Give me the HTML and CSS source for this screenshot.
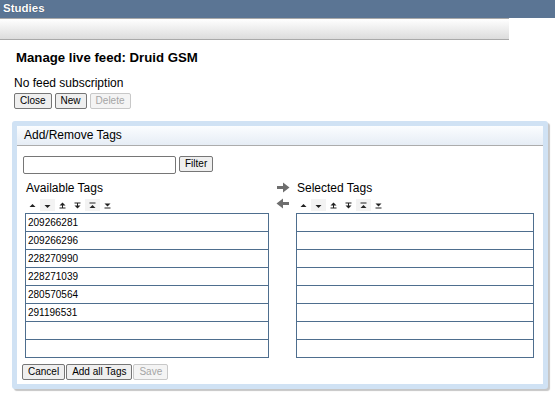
FILE: index.html
```html
<!DOCTYPE html>
<html>
<head>
<meta charset="utf-8">
<link rel="stylesheet" href="styles.css">
</head>
<body>
<div class="topbar">Studies</div>
<div class="toolbar"></div>
<div class="main">
  <h1 class="title">Manage live feed: Druid GSM</h1>
  <div class="status">No feed subscription</div>
  <div class="btnrow">
    <button class="btn">Close</button>
    <button class="btn">New</button>
    <button class="btn" disabled>Delete</button>
  </div>
  <div class="panel">
    <div class="panel-head">Add/Remove Tags</div>
    <div class="panel-body">
      <div class="filter-row">
        <input class="filter-input" type="text">
        <button class="btn">Filter</button>
      </div>
      <div class="columns">
        <div class="col col-left">
          <div class="col-title">Available Tags</div>
          <div class="sorters">
            <span class="sorter"><svg viewBox="0 0 15 11" width="15" height="11"><polygon points="4.5,7 7.5,4 10.5,7" /></svg></span>
            <span class="sorter shade"><svg viewBox="0 0 15 11" width="15" height="11"><polygon points="4.5,5 10.5,5 7.5,8" /></svg></span>
            <span class="sorter"><svg viewBox="0 0 15 11" width="15" height="11"><polygon points="4.5,5.5 7.5,2.5 10.5,5.5" /><rect x="7" y="5" width="1" height="3"/><rect x="4.5" y="7.5" width="6" height="1"/></svg></span>
            <span class="sorter"><svg viewBox="0 0 15 11" width="15" height="11"><rect x="4.5" y="2.5" width="6" height="1"/><rect x="7" y="3" width="1" height="3"/><polygon points="4.5,5.5 10.5,5.5 7.5,8.5" /></svg></span>
            <span class="sorter shade"><svg viewBox="0 0 15 11" width="15" height="11"><rect x="4.5" y="2.5" width="6" height="1"/><polygon points="4.5,8 7.5,5 10.5,8" /></svg></span>
            <span class="sorter"><svg viewBox="0 0 15 11" width="15" height="11"><polygon points="4.5,3.5 10.5,3.5 7.5,6.5" /><rect x="4.5" y="7.5" width="6" height="1"/></svg></span>
          </div>
          <div class="list">
            <div class="row">209266281</div>
            <div class="row">209266296</div>
            <div class="row">228270990</div>
            <div class="row">228271039</div>
            <div class="row">280570564</div>
            <div class="row">291196531</div>
            <div class="row"></div>
            <div class="row"></div>
          </div>
        </div>
        <div class="arrows">
          <svg viewBox="0 0 14 11" width="14" height="11"><path d="M1 4 H7 V0.5 L13.5 5.5 L7 10.5 V7 H1 Z"/></svg>
          <svg viewBox="0 0 14 11" width="14" height="11"><path d="M13 4 H7 V0.5 L0.5 5.5 L7 10.5 V7 H13 Z"/></svg>
        </div>
        <div class="col col-right">
          <div class="col-title">Selected Tags</div>
          <div class="sorters">
            <span class="sorter"><svg viewBox="0 0 15 11" width="15" height="11"><polygon points="4.5,7 7.5,4 10.5,7" /></svg></span>
            <span class="sorter shade"><svg viewBox="0 0 15 11" width="15" height="11"><polygon points="4.5,5 10.5,5 7.5,8" /></svg></span>
            <span class="sorter"><svg viewBox="0 0 15 11" width="15" height="11"><polygon points="4.5,5.5 7.5,2.5 10.5,5.5" /><rect x="7" y="5" width="1" height="3"/><rect x="4.5" y="7.5" width="6" height="1"/></svg></span>
            <span class="sorter"><svg viewBox="0 0 15 11" width="15" height="11"><rect x="4.5" y="2.5" width="6" height="1"/><rect x="7" y="3" width="1" height="3"/><polygon points="4.5,5.5 10.5,5.5 7.5,8.5" /></svg></span>
            <span class="sorter shade"><svg viewBox="0 0 15 11" width="15" height="11"><rect x="4.5" y="2.5" width="6" height="1"/><polygon points="4.5,8 7.5,5 10.5,8" /></svg></span>
            <span class="sorter"><svg viewBox="0 0 15 11" width="15" height="11"><polygon points="4.5,3.5 10.5,3.5 7.5,6.5" /><rect x="4.5" y="7.5" width="6" height="1"/></svg></span>
          </div>
          <div class="list">
            <div class="row"></div>
            <div class="row"></div>
            <div class="row"></div>
            <div class="row"></div>
            <div class="row"></div>
            <div class="row"></div>
            <div class="row"></div>
            <div class="row"></div>
          </div>
        </div>
      </div>
      <div class="btnrow bottom">
        <button class="btn">Cancel</button>
        <button class="btn">Add all Tags</button>
        <button class="btn" disabled>Save</button>
      </div>
    </div>
  </div>
</div>
</body>
</html>
```

FILE: styles.css
```css
* { box-sizing: border-box; }
html, body { margin: 0; padding: 0; background: #fff; }
body {
  font-family: "Liberation Sans", Arial, sans-serif;
  color: #000;
  width: 555px;
  height: 403px;
  overflow: hidden;
}
.topbar {
  height: 18px;
  background: #5b7594;
  color: #fff;
  font-weight: bold;
  font-size: 11.5px;
  line-height: 16px;
  padding-left: 3px;
  text-shadow: 0 0 1px #2d3c50;
}
.toolbar {
  width: 509px;
  height: 22px;
  border-top: 1px solid #a9a9a9;
  border-bottom: 1px solid #a9a9a9;
  background: linear-gradient(#ffffff, #dcdcdc);
}
.main {
  padding-left: 14px;
}
.title {
  margin: 10px 0 0 2px;
  font-size: 13.2px;
  line-height: 16px;
  font-weight: bold;
}
.status {
  margin-top: 10px;
  font-size: 12px;
  line-height: 14px;
}
.btnrow {
  display: flex;
  gap: 3px;
  margin-top: 3px;
}
.btn {
  height: 16px;
  padding: 0 5px;
  font-family: "Liberation Sans", Arial, sans-serif;
  font-size: 10px;
  line-height: 14px;
  color: #000;
  background: #efefef;
  border: 1px solid #767676;
  border-radius: 2px;
}
.btn:disabled {
  color: #a5a5a5;
  border-color: #c8c8c8;
  background: #f4f4f4;
}
.panel {
  margin: 12px 0 0 -2px;
  width: 536px;
  border: 5px solid #d0e2f4;
  border-radius: 3px;
  box-shadow: 2px 2px 1px #c6c6c6;
  background: #fff;
}
.panel-head {
  height: 20px;
  padding-left: 7px;
  font-size: 12px;
  line-height: 19px;
  background: linear-gradient(#fbfdff, #e6edf5);
  border-bottom: 1px solid #acacac;
}
.panel-body {
  padding: 10px 0 4px 6px;
}
.filter-row {
  display: flex;
  gap: 3px;
  align-items: flex-start;
}
.filter-input {
  width: 153px;
  height: 18px;
  border: 1px solid #767676;
  border-radius: 2px;
  padding: 0;
  margin: 0;
}
.columns {
  display: flex;
  margin: 7px 0 0 2px;
}
.col-left { width: 244px; }
.col-right { width: 238px; }
.col-title {
  font-size: 12px;
  line-height: 14px;
  padding-left: 1px;
}
.col-right .col-title { padding-left: 1px; }
.sorters {
  display: flex;
  height: 12px;
  margin: 4px 0 2px 0;
}
.sorter {
  width: 15px;
  height: 12px;
  display: flex;
  align-items: center;
}
.sorter.shade { background: #f3f3f3; }
.sorter svg { fill: #222; }
.arrows {
  width: 27px;
  padding: 1px 0 0 7px;
  display: flex;
  flex-direction: column;
  gap: 5px;
}
.arrows svg { fill: #6e6e6e; }
.list {
  border: 1px solid #4e6e8e;
}
.row {
  height: 17px;
  font-size: 10px;
  line-height: 17px;
  padding-left: 2px;
}
.row + .row {
  height: 18px;
  border-top: 1px solid #4e6e8e;
}
.btnrow.bottom {
  gap: 1px;
  margin: 6px 0 0 -1px;
}
```
